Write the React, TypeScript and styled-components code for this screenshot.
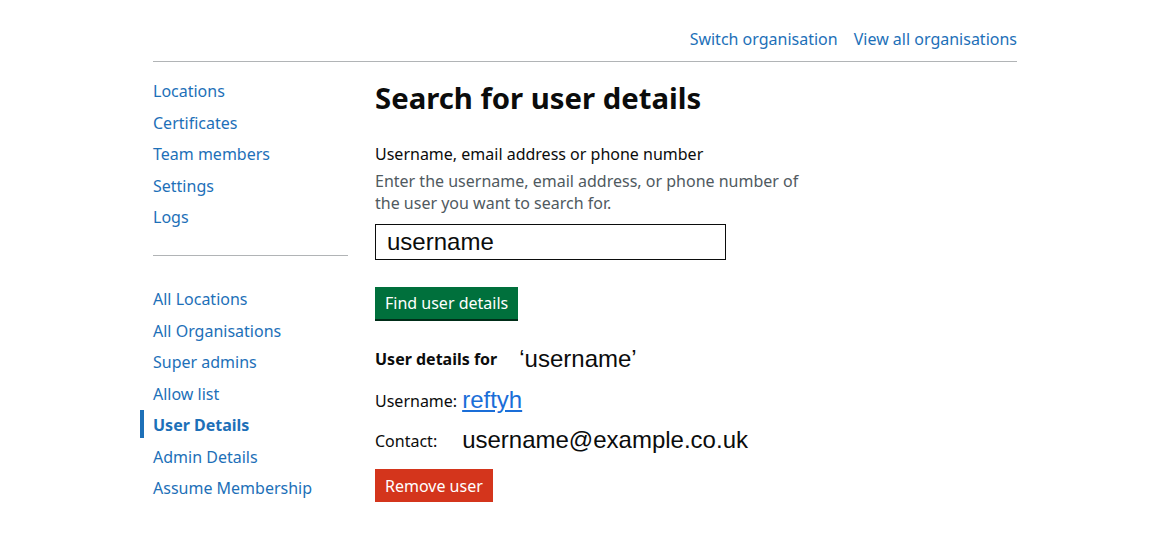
import React from 'react';
import styled, { createGlobalStyle } from 'styled-components';

const GlobalStyle = createGlobalStyle`
  body {
    margin: 0;
    background: #ffffff;
    color: #0b0c0c;
    font-family: "Noto Sans", "Liberation Sans", sans-serif;
  }
`;

const Page = styled.div`
  width: 864px;
  margin-left: 153px;
`;

const TopBar = styled.header`
  display: flex;
  justify-content: flex-end;
  gap: 16px;
  padding: 29px 0 12px;
  line-height: 20px;
  border-bottom: 1px solid #b1b4b6;
`;

const NavLink = styled.a<{ $active?: boolean }>`
  font-size: 16px;
  line-height: 20px;
  color: #1d70b8;
  text-decoration: none;
  font-weight: ${(p) => (p.$active ? 700 : 400)};
`;

const Body = styled.div`
  display: grid;
  grid-template-columns: 195px 1fr;
  column-gap: 27px;
`;

const Side = styled.nav`
  padding-top: 19px;
`;

const SideList = styled.ul`
  list-style: none;
  margin: 0;
  padding: 0;
  display: flex;
  flex-direction: column;
  gap: 11.5px;
`;

const SideItem = styled.li<{ $active?: boolean }>`
  position: relative;
  line-height: 20px;
  height: 20px;
  &::before {
    content: '';
    display: ${(p) => (p.$active ? 'block' : 'none')};
    position: absolute;
    left: -13px;
    top: -5px;
    width: 4px;
    height: 28px;
    background: #1d70b8;
  }
`;

const SideRule = styled.hr`
  border: 0;
  border-top: 1px solid #b1b4b6;
  margin: 28px 0 33px;
`;

const Main = styled.main`
  padding-top: 16px;
`;

const Heading = styled.h1`
  margin: 0 0 26px;
  font-size: 29.3px;
  line-height: 40px;
  font-weight: 700;
`;

const Label = styled.label`
  display: block;
  font-size: 16px;
  line-height: 20px;
  margin-bottom: 6px;
`;

const Hint = styled.div`
  width: 436px;
  font-size: 16px;
  line-height: 22px;
  color: #505a5f;
  margin-bottom: 10px;
`;

const Input = styled.input`
  display: block;
  box-sizing: border-box;
  width: 351px;
  height: 36px;
  padding: 0 11px;
  border: 1px solid #0b0c0c;
  font-family: "Liberation Sans", Arial, sans-serif;
  font-size: 24px;
  color: #0b0c0c;
  outline: none;
`;

const Button = styled.button<{ $tone: 'green' | 'red' }>`
  display: block;
  border: 0;
  padding: 0 10px;
  height: ${(p) => (p.$tone === 'green' ? '32px' : '33px')};
  font-family: "Noto Sans", "Liberation Sans", sans-serif;
  font-size: 16px;
  color: #ffffff;
  background: ${(p) => (p.$tone === 'green' ? '#00703c' : '#d4351c')};
  box-shadow: 0 2px 0 ${(p) => (p.$tone === 'green' ? '#002d18' : '#1b3328')};
  cursor: pointer;
`;

const FindButton = styled(Button)`
  margin-top: 27px;
`;

const ResultTitle = styled.div`
  display: flex;
  align-items: center;
  gap: 22px;
  margin-top: 25px;
  height: 30px;
`;

const Strong = styled.span`
  font-size: 16px;
  font-weight: 700;
`;

const Value = styled.span`
  font-family: "Liberation Sans", Arial, sans-serif;
  font-size: 24px;
  color: #0b0c0c;
`;

const ValueLink = styled.a`
  font-family: "Liberation Sans", Arial, sans-serif;
  font-size: 24px;
  color: #1a6ed8;
  text-decoration: underline;
  text-underline-offset: 2px;
`;

const Details = styled.dl`
  display: grid;
  grid-template-columns: auto 1fr;
  column-gap: 5px;
  row-gap: 8px;
  align-items: center;
  margin: 11px 0 0;
`;

const Term = styled.dt`
  font-size: 16px;
  line-height: 30px;
`;

const Desc = styled.dd`
  margin: 0;
  line-height: 30px;
`;

const RemoveButton = styled(Button)`
  margin-top: 12px;
`;

const orgLinks = ['Locations', 'Certificates', 'Team members', 'Settings', 'Logs'];
const adminLinks = [
  'All Locations',
  'All Organisations',
  'Super admins',
  'Allow list',
  'User Details',
  'Admin Details',
  'Assume Membership',
];

const App = () => {
  return (
    <>
      <GlobalStyle />
      <Page>
        <TopBar>
          <NavLink href="#">Switch organisation</NavLink>
          <NavLink href="#">View all organisations</NavLink>
        </TopBar>
        <Body>
          <Side>
            <SideList>
              {orgLinks.map((l) => (
                <SideItem key={l}>
                  <NavLink href="#">{l}</NavLink>
                </SideItem>
              ))}
            </SideList>
            <SideRule />
            <SideList>
              {adminLinks.map((l) => (
                <SideItem key={l} $active={l === 'User Details'}>
                  <NavLink href="#" $active={l === 'User Details'}>
                    {l}
                  </NavLink>
                </SideItem>
              ))}
            </SideList>
          </Side>
          <Main>
            <Heading>Search for user details</Heading>
            <Label htmlFor="user-search">Username, email address or phone number</Label>
            <Hint>Enter the username, email address, or phone number of the user you want to search for.</Hint>
            <Input id="user-search" defaultValue="username" />
            <FindButton $tone="green">Find user details</FindButton>
            <ResultTitle>
              <Strong>User details for</Strong>
              <Value>‘username’</Value>
            </ResultTitle>
            <Details>
              <Term>Username:</Term>
              <Desc>
                <ValueLink href="#">reftyh</ValueLink>
              </Desc>
              <Term>Contact:</Term>
              <Desc>
                <Value>username@example.co.uk</Value>
              </Desc>
            </Details>
            <RemoveButton $tone="red">Remove user</RemoveButton>
          </Main>
        </Body>
      </Page>
    </>
  );
};

export default App;
